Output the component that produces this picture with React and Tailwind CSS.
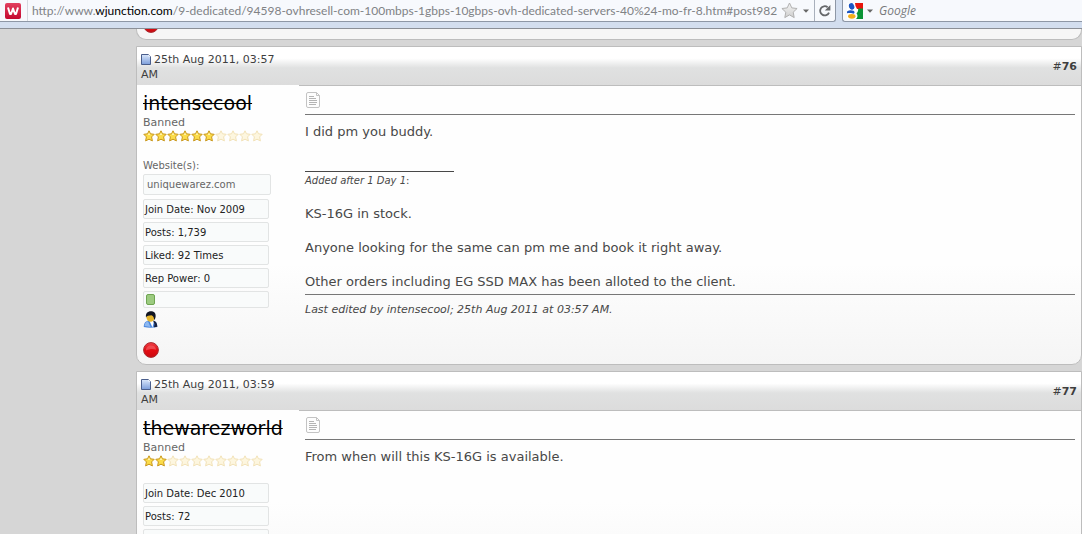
import React from "react";

function SiteIcon() {
  return (
    <svg width="16" height="16" viewBox="0 0 16 16" aria-hidden="true">
      <defs>
        <linearGradient id="site" x1="0" y1="0" x2="0" y2="1">
          <stop offset="0" stopColor="#e2405f" />
          <stop offset="1" stopColor="#c4082f" />
        </linearGradient>
      </defs>
      <rect width="16" height="16" rx="2" fill="url(#site)" />
      <path d="M3 4.500l2 6.500h1l2-5.500L10 11h1l2-6.500" fill="none" stroke="#fff" strokeWidth="2" strokeLinejoin="round" />
    </svg>
  );
}

function BookmarkStar() {
  return (
    <svg width="17" height="17" viewBox="0 0 17 17" aria-hidden="true">
      <defs>
        <linearGradient id="bm" x1="0" y1="0" x2="0" y2="1">
          <stop offset="0" stopColor="#f4f4f4" />
          <stop offset="1" stopColor="#cfcfcf" />
        </linearGradient>
      </defs>
      <path
        d="M8.500 1l2.300 4.900 5.300.6-3.900 3.700 1 5.400-4.700-2.700-4.700 2.700 1-5.400L.9 6.500l5.300-.6z"
        fill="url(#bm)"
        stroke="#b0b0b0"
        strokeLinejoin="round"
      />
    </svg>
  );
}

function Caret() {
  return (
    <svg width="6" height="4" viewBox="0 0 6 4" aria-hidden="true">
      <path d="M0 .5h6L3 3.800z" fill="#666" />
    </svg>
  );
}

function ReloadIcon() {
  return (
    <svg width="14" height="14" viewBox="0 0 14 14" aria-hidden="true">
      <path d="M9.600 3.200A4.600 4.600 0 1 0 11 8.600" fill="none" stroke="#66686b" strokeWidth="1.800" />
      <path d="M12.400 1v5.600H6.800z" fill="#66686b" />
    </svg>
  );
}

function GoogleIcon() {
  return (
    <svg width="16" height="16" viewBox="0 0 16 16" aria-hidden="true">
      <rect width="16" height="16" fill="#fff" />
      <path d="M8 0h8v6h-6L8.500 3z" fill="#e8140c" />
      <path d="M11 5.600h5V16H9c1.800-1.600 2-3.800.5-5.800C11 9 11.500 7.500 11 5.600z" fill="#0a9436" />
      <ellipse cx="4.600" cy="3.400" rx="2.600" ry="3.300" transform="rotate(-20 4.600 3.400)" fill="#1a55c4" />
      <path d="M0 8.400C2 7 4.500 6.800 6.500 7.800c1.400.9 1.400 2.200.2 3C5 9.600 2 9.800 0 10.200z" fill="#1a55c4" />
      <ellipse cx="4.800" cy="13.300" rx="3.700" ry="2.400" fill="#f3ae1c" />
    </svg>
  );
}

function PostStatusIcon() {
  return (
    <svg className="mr-0.5 inline-block" width="11" height="11" viewBox="0 0 11 11" role="img" aria-label="Old">
      <defs>
        <linearGradient id="old" x1="0" y1="0" x2="0" y2="1">
          <stop offset="0" stopColor="#dbe8fb" />
          <stop offset="1" stopColor="#7b9ddb" />
        </linearGradient>
      </defs>
      <path d="M.5.500h7l2 2v8h-9z" fill="url(#old)" stroke="#4a5e8c" />
      <path d="M7.500.500v2h2z" fill="#fff" />
    </svg>
  );
}

function PageIcon() {
  return (
    <svg width="14" height="16" viewBox="0 0 14 16" role="img" aria-label="Default">
      <path d="M2 .5h8.500l3 3V14a1.500 1.500 0 0 1-1.500 1.500H2A1.500 1.500 0 0 1 .5 14V2A1.500 1.500 0 0 1 2 .5z" fill="#fdfdfd" stroke="#c3c3c3" />
      <path d="M10.500.5v3h3" fill="none" stroke="#c3c3c3" />
      <path d="M3 4.500h5M3 6.500h7M3 8.500h8M3 10.500h8M3 12.500h7" stroke="#b4b4b4" />
    </svg>
  );
}

function RankStar({ lit }) {
  return (
    <svg width="12" height="12" viewBox="0 0 12 12" aria-hidden="true">
      <path
        d="M6 .8l1.500 3 3.700.5-2.600 2.600.8 4L6 9.200l-3.400 1.700.8-4L.8 4.300l3.700-.5z"
        fill={lit ? "#fbdc4a" : "#fdf6df"}
        stroke={lit ? "#c9971c" : "#f2e2b8"}
        strokeLinejoin="round"
      />
      {lit && <path d="M6 2.500l1 2.400H5z" fill="#fff6c0" />}
    </svg>
  );
}

function UserIcon() {
  return (
    <svg width="16" height="17" viewBox="0 0 16 17" role="img" aria-label="Send message">
      <path d="M.8 16c0-4 2-6.200 5-6.200h4.500c2.500 0 4 2.400 4 6.200-4 1-9.500 1-13.500 0z" fill="#4a86dd" />
      <path d="M1.500 15c.2-3 1.500-4.500 3.500-4.800L7.500 16z" fill="#8db8f0" />
      <path d="M6.500 10l3 6.500 1.500-6.500z" fill="#fff" />
      <path d="M10 9.500c3 .5 4.300 3 4.300 6.300L11 16.300 11.500 13z" fill="#18213f" />
      <ellipse cx="7.500" cy="6.200" rx="4" ry="4.600" fill="#e5b52c" />
      <path d="M3 6.500C2.400 2.400 4.500.3 8 .3c3.300 0 5 2.200 4.600 5.400-.2 1.500-.7 2.700-1.500 3.300C11 6.500 10.500 5 8.500 4.300 6 4.600 4 4.300 3 6.500z" fill="#111522" />
    </svg>
  );
}

function RedDot() {
  return (
    <svg className="block shrink-0" width="16" height="16" viewBox="0 0 16 16" role="img" aria-label="Offline">
      <defs>
        <linearGradient id="dot" x1="0" y1="0" x2="0" y2="1">
          <stop offset="0" stopColor="#ee4048" />
          <stop offset=".5" stopColor="#e50c12" />
          <stop offset="1" stopColor="#c90a10" />
        </linearGradient>
      </defs>
      <circle cx="8" cy="8" r="7.400" fill="url(#dot)" stroke="#a92a30" />
      <path d="M3 8.500c0-3.400 2.200-5 5-5s5 1.600 5 4.200c-3-1.200-6.500-.8-10 .8z" fill="#f4686c" opacity=".6" />
    </svg>
  );
}

function BrowserBar() {
  return (
    <header className="shrink-0 border-b border-[#8b8f97] bg-[#d3deef] pb-1.5 text-xs">
      <div className="flex h-[22px] gap-1.5">
        <div className="flex min-w-0 flex-1 rounded-br-[3px] border-r border-b border-[#8e97a6] bg-[#f7f9fd]">
          <div className="flex w-7 shrink-0 items-center justify-center border-r border-[#d5d9e0] pr-0.5">
            <SiteIcon />
          </div>
          <div
            role="textbox"
            aria-label="Address"
            contentEditable
            suppressContentEditableWarning
            spellCheck={false}
            className="ml-1 min-w-0 flex-1 overflow-hidden font-[Lato,sans-serif] leading-[22px] whitespace-nowrap text-[#808285] outline-none"
          >
            http://www.<span className="text-black">wjunction.com</span>
            /9-dedicated/94598-ovhresell-com-100mbps-1gbps-10gbps-ovh-dedicated-servers-40%24-mo-fr-8.htm#post982
          </div>
          <button type="button" aria-label="Bookmark this page" className="flex shrink-0 items-center">
            <BookmarkStar />
          </button>
          <button type="button" aria-label="Show history" className="flex w-4 shrink-0 items-center justify-center">
            <Caret />
          </button>
          <button
            type="button"
            aria-label="Reload"
            className="flex w-[21px] shrink-0 items-center justify-center border-l border-[#a9b0bc]"
          >
            <ReloadIcon />
          </button>
        </div>
        <form className="flex w-60 shrink-0 items-center rounded-bl-[3px] border-b border-l border-[#8e97a6] bg-[#f7f9fd]">
          <button type="button" aria-label="Choose search engine" className="flex items-center gap-1 pl-1">
            <GoogleIcon />
            <Caret />
          </button>
          <input
            type="text"
            aria-label="Search"
            placeholder="Google"
            className="ml-1.5 min-w-0 flex-1 bg-transparent font-['Open_Sans',sans-serif] italic outline-none placeholder:text-[#77797c]"
          />
        </form>
      </div>
    </header>
  );
}

function Fact({ children }) {
  return (
    <li className="flex h-5 w-[126px] items-center rounded-xs border border-[#e2e4e4] bg-[#f9fbfb] px-px text-[10px] text-[#222]">
      {children}
    </li>
  );
}

function Post({ number, time, user, stars, website, facts, reputation, children }) {
  return (
    <article className="rounded-b-[10px] border border-[#bdbdbd] bg-[#fefefe] bg-linear-to-t from-[#f5f5f5] to-[#fefefe] to-[100px]">
      <div className="flex h-[38px] items-center justify-between bg-linear-to-b from-white from-30% via-[#e0e1e1] via-55% to-[#dcdcdc] pr-1 pl-1 text-[11px] leading-[15px] text-[#3e3e3e]">
        <p className="w-36 pt-px">
          <PostStatusIcon />
          {time}
        </p>
        <a href={"#post" + number}>
          #<b>{number}</b>
        </a>
      </div>
      <div className="flex">
        <div className="w-[162px] shrink-0 pt-1.5 pb-1.5 pl-1.5">
          <a href={"#" + user} className="block text-[19px] leading-6 text-black line-through">
            {user}
          </a>
          <p className="text-[11px] leading-[15px] text-[#666]">Banned</p>
          <div className="flex" role="img" aria-label={stars + " of 10 stars"}>
            {Array.from({ length: 10 }, (_, i) => (
              <RankStar key={i} lit={i < stars} />
            ))}
          </div>
          {website && (
            <div className="-mb-3 pt-4 text-[10px] text-[#666]">
              <p className="leading-4">Website(s):</p>
              <a
                href={"http://" + website}
                className="flex h-[21px] w-32 items-center rounded-xs border border-[#e2e4e4] bg-[#f9fbfb] px-[3px]"
              >
                {website}
              </a>
            </div>
          )}
          <ul className="mt-4 flex flex-col gap-[3px]">
            {facts.map((fact) => (
              <Fact key={fact}>{fact}</Fact>
            ))}
            <li className="flex h-[17px] w-[126px] items-center rounded-xs border border-[#e2e4e4] bg-[#f9fbfb] px-0.5">
              {reputation && (
                <span className="h-[11px] w-[9px] rounded-xs border border-[#6fa552] bg-[#9ccb80]" />
              )}
            </li>
          </ul>
          <div className="mt-[3px] flex flex-col gap-3.5">
            <UserIcon />
            <RedDot />
          </div>
        </div>
        <div className="min-w-0 flex-1 border-t border-[#bdbdbd] pr-1.5 pl-1.5 text-[13px] leading-[17px] text-[#484848]">
          <div className="flex h-[29px] items-center border-b border-[#777] px-px">
            <PageIcon />
          </div>
          <div className="pt-2">{children}</div>
        </div>
      </div>
    </article>
  );
}

export default function App() {
  return (
    <div className="flex h-screen flex-col overflow-hidden bg-[#d6d6d6] font-['DejaVu_Sans',Verdana,sans-serif]">
      <BrowserBar />
      <main className="flex min-h-0 flex-1 flex-col overflow-hidden pl-[136px]">
        <div className="flex h-[11px] shrink-0 items-end overflow-hidden rounded-b-[10px] border-x border-b border-[#bdbdbd] bg-[#f6f6f6] pb-1.5 pl-1.5">
          <RedDot />
        </div>
        <div className="mt-1.5 flex shrink-0 flex-col gap-1.5">
          <Post
            number="76"
            time="25th Aug 2011, 03:57 AM"
            user="intensecool"
            stars={6}
            website="uniquewarez.com"
            facts={["Join Date: Nov 2009", "Posts: 1,739", "Liked: 92 Times", "Rep Power: 0"]}
            reputation
          >
            <p>I did pm you buddy.</p>
            <div className="h-8 w-[149px] border-b border-[#484848]" />
            <p className="mb-4 text-[10px]">
              <i>Added after 1 Day 1</i>:
            </p>
            <div className="flex flex-col gap-[17px]">
              <p>KS-16G in stock.</p>
              <p>Anyone looking for the same can pm me and book it right away.</p>
              <p>Other orders including EG SSD MAX has been alloted to the client.</p>
            </div>
            <p className="mt-1 border-t border-[#777] pt-1.5 text-[11px] italic">
              Last edited by intensecool; 25th Aug 2011 at 03:57 AM.
            </p>
          </Post>
          <Post
            number="77"
            time="25th Aug 2011, 03:59 AM"
            user="thewarezworld"
            stars={2}
            facts={["Join Date: Dec 2010", "Posts: 72"]}
          >
            <p>From when will this KS-16G is available.</p>
          </Post>
        </div>
      </main>
    </div>
  );
}
